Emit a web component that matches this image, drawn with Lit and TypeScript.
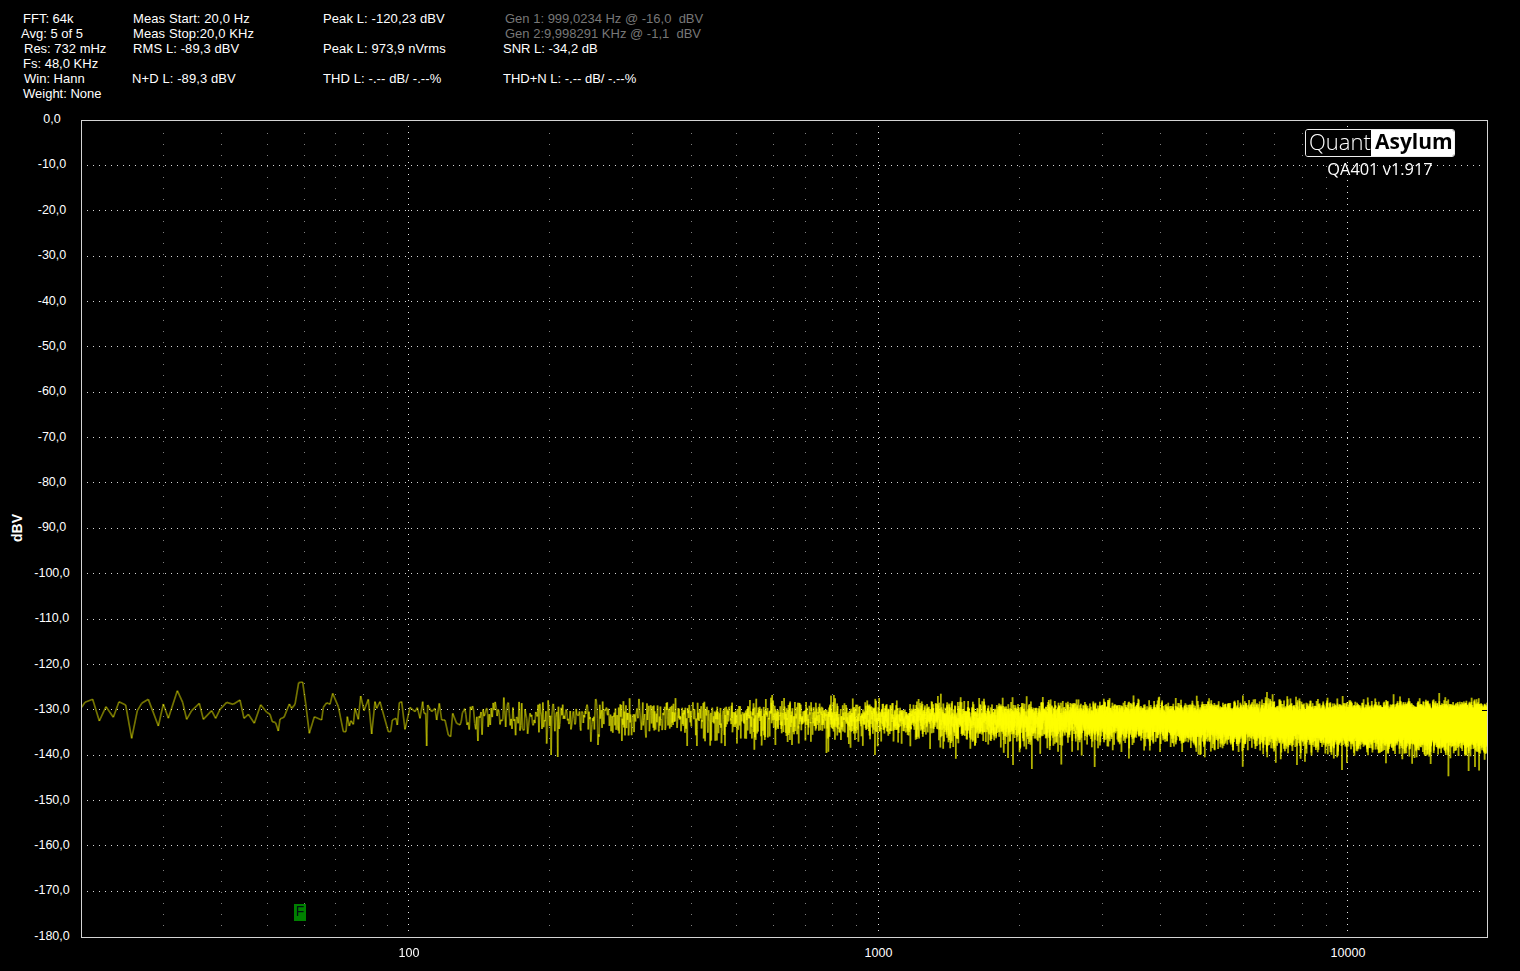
import { LitElement, html, css } from "lit";
import { customElement } from "lit/decorators.js";

const X = (f: number) => 327.5 + 469.5 * Math.log10(f / 100);
const W = 1407, H = 818;

type Cell = { t: string; i?: number; dim?: boolean };
const cols: Cell[][] = [
  [{ t: "FFT: 64k", i: 2 }, { t: "Avg: 5 of 5" }, { t: "Res: 732 mHz", i: 3 }, { t: "Fs: 48,0 KHz", i: 2 }, { t: "Win: Hann", i: 3 }, { t: "Weight: None", i: 2 }],
  [{ t: "Meas Start: 20,0 Hz", i: 1 }, { t: "Meas Stop:20,0 KHz", i: 1 }, { t: "RMS L: -89,3 dBV", i: 1 }, { t: "" }, { t: "N+D L: -89,3 dBV" }, { t: "" }],
  [{ t: "Peak L: -120,23 dBV" }, { t: "" }, { t: "Peak L: 973,9 nVrms" }, { t: "" }, { t: "THD L: -.-- dB/ -.--%" }, { t: "" }],
  [{ t: "Gen 1: 999,0234 Hz @ -16,0  dBV", i: 2, dim: true }, { t: "Gen 2:9,998291 KHz @ -1,1  dBV", i: 2, dim: true }, { t: "SNR L: -34,2 dB" }, { t: "" }, { t: "THD+N L: -.-- dB/ -.--%" }, { t: "" }],
];

const yLabels = Array.from({ length: 19 }, (_, i) => (i === 0 ? "0,0" : `-${i * 10},0`));
const xLabels = [100, 1000, 10000];

// Hand-read low-frequency part of the trace, in page pixels
const low: number[][] = [[65,112],[75,97],[98,88],[118,153],[138,110],[160,142],[177,95],[197,105],[215,205],[232,122],[245,100],[265,88],[295,168],[310,102],[325,145],[352,62],[368,97],[380,148],[395,122],[418,100],[430,148],[455,122],[467,145],[480,118],[500,97],[520,103],[540,90],[552,145],[565,133],[583,160],[602,104],[620,127],[630,133],[637,155],[647,158],[655,183],[660,147],[672,142],[688,102],[695,115],[705,103],[716,38],[728,36],[737,100],[748,190],[763,140],[785,150],[790,112],[800,98],[810,103],[818,70],[835,110],[850,185],[858,185],[862,140],[868,168],[873,152],[880,163],[885,115],[895,148],[902,78],[912,122],[925,88],[935,192],[945,95],[950,115],[960,95],[985,185],[992,185],[997,150],[1008,145],[1012,165],[1018,98],[1025,95],[1035,178],[1050,112],[1065,125],[1072,113],[1080,145],[1088,95],[1092,130],[1097,130],[1100,228],[1103,105],[1115,125],[1125,115],[1130,150],[1138,100],[1145,150],[1155,150],[1165,195],[1172,200],[1178,130],[1190,160],[1200,165]]
  .map(([a, b]) => [60 + a / 3, 670 + b / 3]);

const spikes: number[][] = [[551,755],[558,757],[697,746],[875,755],[1013,765],[1342,770],[1475,767],[1267,692],[1008,758],[622,741],[725,746]];

function trace(): number[][] {
  let s = 20240611;
  const rnd = () => {
    s = (s + 0x6d2b79f5) | 0;
    let t = Math.imul(s ^ (s >>> 15), 1 | s);
    t = (t + Math.imul(t ^ (t >>> 7), 61 | t)) ^ t;
    return ((t ^ (t >>> 14)) >>> 0) / 4294967296;
  };
  const pts = low.slice();
  const start = Math.ceil(129 / 0.732);
  for (let k = start; k < 27500; k++) {
    const f = k * 0.732;
    const x = 81 + X(f);
    let g = 0;
    for (let j = 0; j < 5; j++) g -= Math.log(1 - rnd());
    const mean = 714 + 7 * Math.min(1, Math.log10(f / 129) / 2);
    pts.push([x, mean - 4.537 * 10 * Math.log10(g / 5)]);
  }
  for (const [sx, sy] of spikes) {
    let best = -1, d = 1e9;
    for (let i = low.length; i < pts.length; i++) {
      const e = Math.abs(pts[i][0] - sx);
      if (e < d) { d = e; best = i; }
    }
    if (best >= 0) pts[best][1] = sy;
  }
  return pts;
}

@customElement("app-root")
export class AppRoot extends LitElement {
  static styles = css`
    :host {
      display: flex;
      flex-direction: column;
      width: 1520px;
      height: 971px;
      background: #000;
      color: #fff;
      font-family: "Liberation Sans", Arial, sans-serif;
      font-size: 12.5px;
      overflow: hidden;
    }
    .head {
      display: grid;
      grid-template-columns: 111px 191px 180px auto;
      justify-content: start;
      padding: 11px 0 0 21px;
      height: 110px;
      box-sizing: border-box;
      flex: none;
      font-size: 13px;
    }
    .col { display: grid; grid-auto-rows: 15px; align-items: center; }
    .col:nth-child(2), .col:nth-child(3) { letter-spacing: 0.1px; }
    .cell { white-space: pre; line-height: 15px; height: 15px; }
    .i1 { padding-left: 1px; }
    .i2 { padding-left: 2px; }
    .i3 { padding-left: 3px; }
    .dim { color: #777; }
    .main { display: flex; flex: none; align-items: flex-start; }
    .unit {
      width: 34px;
      height: 836px;
      display: flex;
      align-items: center;
      justify-content: center;
      font-weight: bold;
    }
    .unit span { writing-mode: vertical-rl; transform: rotate(180deg); font-size: 14px; }
    .ylabels {
      width: 36px;
      height: 832px;
      display: flex;
      flex-direction: column;
      justify-content: space-between;
      align-items: center;
      margin: 2px 11px 0 0;
    }
    .ylabels span { line-height: 15px; height: 15px; white-space: nowrap; }
    .right { display: flex; flex-direction: column; margin-top: 10px; }
    .plot {
      position: relative;
      width: ${W}px;
      height: ${H}px;
    }
    canvas { display: block; }
    .logo {
      position: absolute;
      left: 1224px;
      top: 9px;
      width: 150px;
      height: 28px;
      box-sizing: border-box;
      border: 1px solid #eee;
      border-radius: 3px;
      display: flex;
      overflow: hidden;
      font-family: "Open Sans", sans-serif;
      font-size: 22px;
      line-height: 22px;
    }
    .q { font-weight: 300; background: #000; padding-left: 3px; width: 65px; box-sizing: border-box; }
    .a { font-weight: 700; font-size: 21px; color: #000; background: #fff; flex: 1; padding-left: 4px; }
    .ver {
      position: absolute;
      left: 1224px;
      width: 150px;
      top: 38px;
      text-align: center;
      font-family: "Open Sans", sans-serif;
      font-size: 16.4px;
      line-height: 22px;
    }
    .marker {
      position: absolute;
      left: 213px;
      top: 784px;
      width: 12px;
      height: 17px;
      background: #008000;
      color: #011;
      font-size: 14px;
      line-height: 15px;
      text-align: center;
    }
    .xaxis { position: relative; height: 33px; }
    .xaxis span {
      position: absolute;
      top: 8px;
      line-height: 15px;
      transform: translateX(-50%);
    }
  `;

  firstUpdated() {
    const c = this.renderRoot.querySelector("canvas") as HTMLCanvasElement;
    const g = c.getContext("2d")!;
    // canvas origin is the plot's top-left corner
    g.fillStyle = "#d8d8d8";
    for (let d = 10; d < 180; d += 10) {
      const y = Math.floor(d * 4.537);
      for (let x = 6; x < W - 4; x += 6) g.fillRect(x, y, 1, 1);
    }
    for (const dec of [10, 100, 1000, 10000]) {
      for (let m = 1; m < 10; m++) {
        const f = dec * m;
        if (f <= 20 || f > 19000) continue;
        const x = Math.floor(X(f));
        const major = m === 1;
        g.fillStyle = major ? "#e6e6e6" : "#808080";
        const step = major ? 6 : 11;
        for (let y = major ? 6 : 13; y < H - 2; y += step) g.fillRect(x, y, 1, 1);
      }
    }

    // trace: each segment stroked on its own so overlap builds up to full yellow
    const pts = trace();
    g.save();
    g.beginPath();
    g.rect(1, 1, W - 2, H - 2);
    g.clip();
    g.strokeStyle = "rgba(255,255,0,0.45)";
    g.lineWidth = 1.7;
    for (let i = 1; i < pts.length; i++) {
      g.beginPath();
      g.moveTo(pts[i - 1][0] - 81, pts[i - 1][1] - 120);
      g.lineTo(pts[i][0] - 81, pts[i][1] - 120);
      g.stroke();
    }
    g.restore();
    g.fillStyle = "#000";
    g.fillRect(W - 6, 590, 5, 1);

    g.strokeStyle = "#d4d4d4";
    g.lineWidth = 1;
    g.strokeRect(0.5, 0.5, W - 1, H - 1);
  }

  render() {
    return html`
      <div class="head">
        ${cols.map(
          (col) => html`<div class="col">
            ${col.map((c) => html`<div class="cell ${c.i ? `i${c.i}` : ""} ${c.dim ? "dim" : ""}">${c.t}</div>`)}
          </div>`
        )}
      </div>
      <div class="main">
        <div class="unit"><span>dBV</span></div>
        <div class="ylabels">${yLabels.map((l) => html`<span>${l}</span>`)}</div>
        <div class="right">
          <div class="plot">
            <canvas width=${W} height=${H}></canvas>
            <div class="logo"><div class="q">Quant</div><div class="a">Asylum</div></div>
            <div class="ver">QA401 v1.917</div>
            <div class="marker">F</div>
          </div>
          <div class="xaxis">
            ${xLabels.map((f) => html`<span style="left:${X(f) + 0.5}px">${f}</span>`)}
          </div>
        </div>
      </div>
    `;
  }
}
